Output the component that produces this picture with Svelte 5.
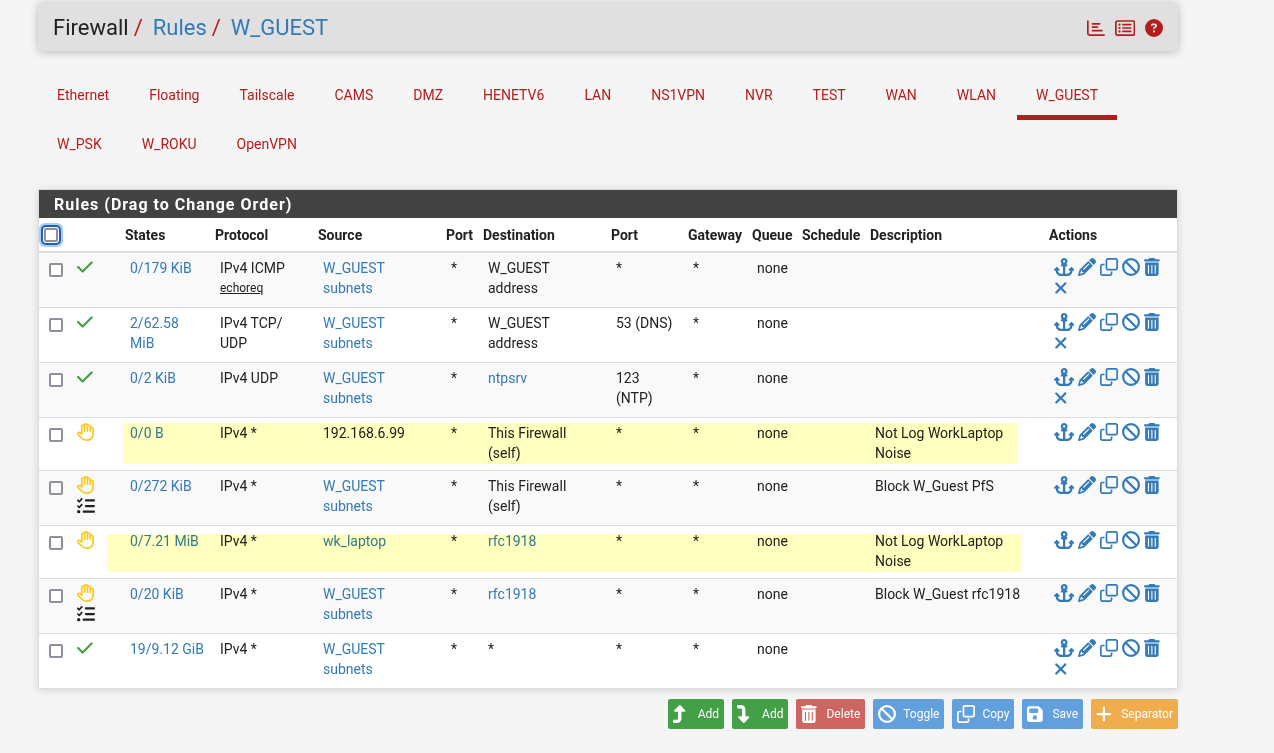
<script>
  const tabs = [
    'Ethernet', 'Floating', 'Tailscale', 'CAMS', 'DMZ', 'HENETV6', 'LAN', 'NS1VPN', 'NVR',
    'TEST', 'WAN', 'WLAN', 'W_GUEST', 'W_PSK', 'W_ROKU', 'OpenVPN',
  ];
  let active = $state('W_GUEST');

  const bar = 'c-8.8 0-16 7.2-16 16V432c0 8.8 7.2 16 16 16s16-7.2 16-16V208c0-8.8-7.2-16-16-16z';

  // [width, path] on a 512 high grid
  const icons = {
    anchor: [576, 'M320 96a32 32 0 1 1 -64 0 32 32 0 1 1 64 0zm21.1 80C367 158.8 384 129.4 384 96c0-53-43-96-96-96s-96 43-96 96c0 33.4 17 62.8 42.9 80H224c-17.7 0-32 14.3-32 32s14.3 32 32 32h32V448H208c-53 0-96-43-96-96v-6.1l7 7c9.4 9.4 24.6 9.4 33.9 0s9.4-24.6 0-33.9L97 263c-9.4-9.4-24.6-9.4-33.9 0L7 319c-9.4 9.4-9.4 24.6 0 33.9s24.6 9.4 33.9 0l7-7V352c0 88.4 71.6 160 160 160h80 80c88.4 0 160-71.6 160-160v-6.1l7 7c9.4 9.4 24.6 9.4 33.9 0s9.4-24.6 0-33.9l-56-56c-9.4-9.4-24.6-9.4-33.9 0l-56 56c-9.4 9.4-9.4 24.6 0 33.9s24.6 9.4 33.9 0l7-7V352c0 53-43 96-96 96H320V240h32c17.7 0 32-14.3 32-32s-14.3-32-32-32H341.1z'],
    pencil: [512, 'M410.3 231l11.3-11.3-33.9-33.9-62.1-62.1L291.7 89.8l-11.3 11.3-22.6 22.6L58.6 322.9c-10.4 10.4-18 23.3-22.2 37.4L1 480.7c-2.5 8.4-.2 17.5 6.1 23.7s15.3 8.5 23.7 6.1l120.3-35.4c14.1-4.2 27-11.8 37.4-22.2L387.7 253.7 410.3 231zM160 399.4l-9.1 22.7c-4 3.1-8.5 5.4-13.3 6.9L59.4 452l23-78.1c1.4-4.9 3.8-9.4 6.9-13.3l22.7-9.1v32c0 8.8 7.2 16 16 16h32zM362.7 18.7L348.3 33.2 325.7 55.8 314.3 67.1l33.9 33.9 62.1 62.1 33.9 33.9 11.3-11.3 22.6-22.6 14.5-14.5c25-25 25-65.5 0-90.5L453.3 18.7c-25-25-65.5-25-90.5 0zm-47.4 168l-144 144c-6.2 6.2-16.4 6.2-22.6 0s-6.2-16.4 0-22.6l144-144c6.2-6.2 16.4-6.2 22.6 0s6.2 16.4 0 22.6z'],
    clone: [512, 'M64 464H288c8.8 0 16-7.2 16-16V384h48v64c0 35.3-28.7 64-64 64H64c-35.3 0-64-28.7-64-64V224c0-35.3 28.7-64 64-64h64v48H64c-8.8 0-16 7.2-16 16V448c0 8.8 7.2 16 16 16zM224 304H448c8.8 0 16-7.2 16-16V64c0-8.8-7.2-16-16-16H224c-8.8 0-16 7.2-16 16V288c0 8.8 7.2 16 16 16zm-64-16V64c0-35.3 28.7-64 64-64H448c35.3 0 64 28.7 64 64V288c0 35.3-28.7 64-64 64H224c-35.3 0-64-28.7-64-64z'],
    ban: [512, 'M367.2 412.5L99.5 144.8C77.1 176.1 64 214.5 64 256c0 106 86 192 192 192c41.5 0 79.9-13.1 111.2-35.5zm45.3-45.3C434.9 335.9 448 297.5 448 256c0-106-86-192-192-192c-41.5 0-79.9 13.1-111.2 35.5L412.5 367.2zM0 256a256 256 0 1 1 512 0A256 256 0 1 1 0 256z'],
    trash: [448, 'M135.2 17.7C140.6 6.8 151.7 0 163.8 0H284.2c12.1 0 23.2 6.8 28.6 17.7L320 32h96c17.7 0 32 14.3 32 32s-14.3 32-32 32H32C14.3 96 0 81.7 0 64S14.3 32 32 32h96l7.2-14.3zM32 128H416V448c0 35.3-28.7 64-64 64H96c-35.3 0-64-28.7-64-64V128zM128 192' + bar + 'M224 192' + bar + 'M320 192' + bar],
    xmark: [384, 'M342.6 150.6c12.5-12.5 12.5-32.8 0-45.3s-32.8-12.5-45.3 0L192 210.7 86.6 105.4c-12.5-12.5-32.8-12.5-45.3 0s-12.5 32.8 0 45.3L146.7 256 41.4 361.4c-12.5 12.5-12.5 32.8 0 45.3s32.8 12.5 45.3 0L192 301.3 297.4 406.6c12.5 12.5 32.8 12.5 45.3 0s12.5-32.8 0-45.3L237.3 256 342.6 150.6z'],
    check: [448, 'M438.6 105.4c12.5 12.5 12.5 32.8 0 45.3l-256 256c-12.5 12.5-32.8 12.5-45.3 0l-128-128c-12.5-12.5-12.5-32.8 0-45.3s32.8-12.5 45.3 0L160 338.7 393.4 105.4c12.5-12.5 32.8-12.5 45.3 0z'],
    hand: [512, 'M256 0c-25.3 0-47.2 14.7-57.6 36c-7-2.6-14.5-4-22.4-4c-35.3 0-64 28.7-64 64V261.5l-2.7-2.7c-25-25-65.5-25-90.5 0s-25 65.5 0 90.5L106.5 437c48 48 113.1 75 181 75H296h8c1.5 0 3-.1 4.5-.4c91.7-6.2 165-79.4 171.1-171.1c.3-1.5 .4-3 .4-4.5V160c0-35.3-28.7-64-64-64c-5.5 0-10.9 .7-16 2V96c0-35.3-28.7-64-64-64c-7.9 0-15.4 1.4-22.4 4C303.2 14.7 281.3 0 256 0zM240 96.1c0 0 0-.1 0-.1V64c0-8.8 7.2-16 16-16s16 7.2 16 16V95.9c0 0 0 .1 0 .1V232c0 13.3 10.7 24 24 24s24-10.7 24-24V96c0 0 0 0 0-.1c0-8.8 7.2-16 16-16s16 7.2 16 16v55.9c0 0 0 .1 0 .1v80c0 13.3 10.7 24 24 24s24-10.7 24-24V160.1c0 0 0-.1 0-.1c0-8.8 7.2-16 16-16s16 7.2 16 16V332.9c-.1 .6-.1 1.3-.2 1.9c-3.4 69.7-59.3 125.6-129 129c-.6 0-1.3 .1-1.9 .2H296h-8.5c-55.2 0-108.1-21.9-147.1-60.9L52.7 315.3c-6.2-6.2-6.2-16.4 0-22.6s16.4-6.2 22.6 0L119 336.4c6.9 6.9 17.2 8.9 26.2 5.2s14.8-12.5 14.8-22.2V96c0-8.8 7.2-16 16-16c8.8 0 16 7.1 16 15.9V232c0 13.3 10.7 24 24 24s24-10.7 24-24V96.1z'],
    log: [512, 'M152 38c10 9 11 24 2 34L82 152c-4 5-10 8-17 8s-13-2-18-7L7 113c-9-9-9-25 0-34s25-9 34 0l22 22 56-62c9-10 24-11 34-1zm0 160c10 9 11 24 2 34l-72 80c-4 5-10 8-17 8s-13-2-18-7L7 273c-9-9-9-25 0-34s25-9 34 0l22 22 56-62c9-10 24-11 34-1zM224 96c0-18 14-32 32-32H480c18 0 32 14 32 32s-14 32-32 32H256c-18 0-32-14-32-32zm0 160c0-18 14-32 32-32H480c18 0 32 14 32 32s-14 32-32 32H256c-18 0-32-14-32-32zM160 416c0-18 14-32 32-32H480c18 0 32 14 32 32s-14 32-32 32H192c-18 0-32-14-32-32zM48 368a48 48 0 1 1 0 96 48 48 0 1 1 0-96z'],
    up: [384, 'M350 177.5c3.8-8.8 2-19-4.6-26l-136-144C204.9 2.7 198.6 0 192 0s-12.9 2.7-17.4 7.5l-136 144c-6.6 7-8.4 17.2-4.6 26s12.5 14.5 22 14.5h88l0 192c0 17.7-14.3 32-32 32H32c-17.7 0-32 14.3-32 32v32c0 17.7 14.3 32 32 32l80 0c70.7 0 128-57.3 128-128l0-192h88c9.6 0 18.2-5.7 22-14.5z'],
    down: [384, 'M350 334.5c3.8 8.8 2 19-4.6 26l-136 144c-4.5 4.8-10.8 7.5-17.4 7.5s-12.9-2.7-17.4-7.5l-136-144c-6.6-7-8.4-17.2-4.6-26s12.5-14.5 22-14.5h88V128c0-17.7-14.3-32-32-32H32C14.3 96 0 81.7 0 64V32C0 14.3 14.3 0 32 0h80c70.7 0 128 57.3 128 128v192h88c9.6 0 18.2 5.7 22 14.5z'],
    save: [448, 'M64 32C28.7 32 0 60.7 0 96V416c0 35.3 28.7 64 64 64H384c35.3 0 64-28.7 64-64V173.3c0-17-6.7-33.3-18.7-45.3L352 50.7C340 38.7 323.7 32 306.7 32H64zm0 96c0-17.7 14.3-32 32-32H288c17.7 0 32 14.3 32 32v64c0 17.7-14.3 32-32 32H96c-17.7 0-32-14.3-32-32V128zM224 288a64 64 0 1 1 0 128 64 64 0 1 1 0-128z'],
    plus: [448, 'M256 80c0-17.7-14.3-32-32-32s-32 14.3-32 32V224H48c-17.7 0-32 14.3-32 32s14.3 32 32 32H192V432c0 17.7 14.3 32 32 32s32-14.3 32-32V288H400c17.7 0 32-14.3 32-32s-14.3-32-32-32H256V80z'],
    chart: [512, 'M24 32c13.3 0 24 10.7 24 24V408c0 13.3 10.7 24 24 24H488c13.3 0 24 10.7 24 24s-10.7 24-24 24H72c-39.8 0-72-32.2-72-72V56C0 42.7 10.7 32 24 32zM128 136c0-13.3 10.7-24 24-24H360c13.3 0 24 10.7 24 24s-10.7 24-24 24H152c-13.3 0-24-10.7-24-24zm24 72H296c13.3 0 24 10.7 24 24s-10.7 24-24 24H152c-13.3 0-24-10.7-24-24s10.7-24 24-24zm0 96H424c13.3 0 24 10.7 24 24s-10.7 24-24 24H152c-13.3 0-24-10.7-24-24s10.7-24 24-24z'],
    list: [576, 'M64 80c-8.8 0-16 7.2-16 16V416c0 8.8 7.2 16 16 16H512c8.8 0 16-7.2 16-16V96c0-8.8-7.2-16-16-16H64zM0 96C0 60.7 28.7 32 64 32H512c35.3 0 64 28.7 64 64V416c0 35.3-28.7 64-64 64H64c-35.3 0-64-28.7-64-64V96zm96 64a32 32 0 1 1 64 0 32 32 0 1 1 -64 0zm104 0c0-13.3 10.7-24 24-24H448c13.3 0 24 10.7 24 24s-10.7 24-24 24H224c-13.3 0-24-10.7-24-24zm0 96c0-13.3 10.7-24 24-24H448c13.3 0 24 10.7 24 24s-10.7 24-24 24H224c-13.3 0-24-10.7-24-24zm0 96c0-13.3 10.7-24 24-24H448c13.3 0 24 10.7 24 24s-10.7 24-24 24H224c-13.3 0-24-10.7-24-24zM96 256a32 32 0 1 1 64 0 32 32 0 1 1 -64 0zm32 64a32 32 0 1 1 0 64 32 32 0 1 1 0-64z'],
    help: [512, 'M256 512A256 256 0 1 0 256 0a256 256 0 1 0 0 512zM169.8 165.3c7.9-22.3 29.1-37.3 52.8-37.3h58.3c34.9 0 63.1 28.3 63.1 63.1c0 22.6-12.1 43.5-31.7 54.8L280 264.4c-.2 13-10.9 23.6-24 23.6c-13.3 0-24-10.7-24-24V250.5c0-8.6 4.6-16.5 12.1-20.8l44.3-25.4c4.7-2.7 7.6-7.7 7.6-13.1c0-8.4-6.8-15.1-15.1-15.1H222.6c-3.4 0-6.4 2.1-7.5 5.3l-.4 1.2c-4.4 12.5-18.2 19-30.6 14.6s-19-18.2-14.6-30.6l.4-1.2zM224 352a32 32 0 1 1 64 0 32 32 0 1 1 -64 0z'],
  };

  const columns = [
    'States', 'Protocol', 'Source', 'Port', 'Destination', 'Port', 'Gateway', 'Queue',
    'Schedule', 'Description', 'Actions',
  ];

  const guest = 'W_GUEST\nsubnets';
  const self = 'This Firewall\n(self)';
  const rules = [
    { pass: true, states: '0/179 KiB', proto: 'IPv4 ICMP', sub: 'echoreq', src: guest, srcLink: true, dst: 'W_GUEST\naddress', port: '*', desc: '' },
    { pass: true, states: '2/62.58\nMiB', proto: 'IPv4 TCP/\nUDP', src: guest, srcLink: true, dst: 'W_GUEST\naddress', port: '53 (DNS)', desc: '' },
    { pass: true, states: '0/2 KiB', proto: 'IPv4 UDP', src: guest, srcLink: true, dst: 'ntpsrv', dstLink: true, port: '123\n(NTP)', desc: '' },
    { mark: 'mark', states: '0/0 B', proto: 'IPv4 *', src: '192.168.6.99', dst: self, port: '*', desc: 'Not Log WorkLaptop\nNoise' },
    { log: true, states: '0/272 KiB', proto: 'IPv4 *', src: guest, srcLink: true, dst: self, port: '*', desc: 'Block W_Guest PfS' },
    { mark: 'mark wide', states: '0/7.21 MiB', proto: 'IPv4 *', src: 'wk_laptop', srcLink: true, dst: 'rfc1918', dstLink: true, port: '*', desc: 'Not Log WorkLaptop\nNoise' },
    { log: true, states: '0/20 KiB', proto: 'IPv4 *', src: guest, srcLink: true, dst: 'rfc1918', dstLink: true, port: '*', desc: 'Block W_Guest rfc1918' },
    { pass: true, states: '19/9.12 GiB', proto: 'IPv4 *', src: guest, srcLink: true, dst: '*', port: '*', desc: '' },
  ];

  const actions = [
    ['anchor', 'Move checked rules here'],
    ['pencil', 'Edit'],
    ['clone', 'Copy'],
    ['ban', 'Disable'],
    ['trash', 'Delete this rule'],
  ];

  const buttons = [
    ['up', 'Add', 'success'],
    ['down', 'Add', 'success'],
    ['trash', 'Delete', 'danger'],
    ['ban', 'Toggle', 'primary'],
    ['clone', 'Copy', 'primary'],
    ['save', 'Save', 'primary'],
    ['plus', 'Separator', 'warning'],
  ];
</script>

{#snippet icon(name)}
  <svg class="icon" viewBox="0 0 {icons[name][0]} 512" aria-hidden="true">
    <path fill="currentColor" fill-rule="evenodd" d={icons[name][1]} />
  </svg>
{/snippet}

{#snippet value(text, link)}
  {#if link}<a href="#rule">{text}</a>{:else}{text}{/if}
{/snippet}

<div class="container">
  <header>
    <h1>
      <span>Firewall</span><i>/</i><a href="#rules">Rules</a><i>/</i><a href="#guest">W_GUEST</a>
    </h1>
    <div class="shortcuts">
      <a href="#status" aria-label="Status">{@render icon('chart')}</a>
      <a href="#logs" aria-label="Logs">{@render icon('list')}</a>
      <a href="#help" aria-label="Help">{@render icon('help')}</a>
    </div>
  </header>

  <nav>
    {#each tabs as tab}
      <a href="#{tab}" class:active={tab === active} onclick={() => (active = tab)}>{tab}</a>
    {/each}
  </nav>

  <section class="panel">
    <h2>Rules (Drag to Change Order)</h2>
    <table>
      <colgroup>
        <col class="c-check" /><col class="c-status" /><col class="c-states" /><col class="c-proto" />
        <col class="c-addr" /><col class="c-sport" /><col class="c-addr" /><col class="c-dport" />
        <col class="c-gateway" /><col class="c-queue" /><col class="c-schedule" /><col /><col class="c-actions" />
      </colgroup>
      <thead>
        <tr>
          <th><input type="checkbox" class="focused" aria-label="Select all" /></th>
          <th></th>
          {#each columns as column}
            <th>{column}</th>
          {/each}
        </tr>
      </thead>
      <tbody>
        {#each rules as rule, i}
          <tr>
            <td><input type="checkbox" aria-label="Select rule {i + 1}" /></td>
            <td>
              <div class="status" class:pass={rule.pass}>
                {@render icon(rule.pass ? 'check' : 'hand')}
                {#if rule.log}<span class="log">{@render icon('log')}</span>{/if}
              </div>
              {#if rule.mark}<span class={rule.mark}></span>{/if}
            </td>
            <td><a href="#states">{rule.states}</a></td>
            <td>{rule.proto}{#if rule.sub}<small>{rule.sub}</small>{/if}</td>
            <td>{@render value(rule.src, rule.srcLink)}</td>
            <td>*</td>
            <td>{@render value(rule.dst, rule.dstLink)}</td>
            <td>{rule.port}</td>
            <td>*</td>
            <td>none</td>
            <td></td>
            <td>{rule.desc}</td>
            <td>
              <div class="actions">
                {#each actions as [name, label]}
                  <a href="#{name}" aria-label={label}>{@render icon(name)}</a>
                {/each}
                {#if rule.pass}
                  <a href="#kill" aria-label="Kill states">{@render icon('xmark')}</a>
                {/if}
              </div>
            </td>
          </tr>
        {/each}
      </tbody>
    </table>
  </section>

  <div class="buttons">
    {#each buttons as [name, label, kind]}
      <button type="button" class={kind}><span class="slot">{@render icon(name)}</span>{label}</button>
    {/each}
  </div>
</div>

<style>
  :global(body) {
    background: #f5f5f5;
    color: #212121;
    font-family: Roboto, "Liberation Sans", sans-serif;
    font-size: 14px;
    line-height: 20px;
  }

  a {
    color: #337ab7;
    text-decoration: none;
  }

  .icon {
    display: block;
    height: 18px;
  }

  .container {
    padding: 3px 96px 20px 38px;
  }

  header {
    display: flex;
    align-items: center;
    justify-content: space-between;
    padding: 10px 15px 8px;
    background: #e0e0e0;
    border-radius: 4px;
    box-shadow: 0 1px 8px rgba(0, 0, 0, 0.25);
  }

  h1 {
    display: flex;
    margin: 0;
    font-size: 22px;
    font-weight: 400;
    line-height: 30px;
  }

  h1 i {
    margin: 0 10px 0 5px;
    color: #b71c1c;
    font-style: normal;
  }

  .shortcuts {
    display: flex;
    gap: 10px;
  }

  .shortcuts a {
    color: #b71c1c;
  }

  nav {
    display: flex;
    flex-wrap: wrap;
    gap: 4px 2px;
    margin-top: 24px;
  }

  nav a {
    padding: 10px 19px;
    border-bottom: 5px solid transparent;
    color: #b71c1c;
  }

  nav a.active {
    border-color: #b71c1c;
  }

  .panel {
    margin-top: 20px;
    background: #fff;
    border: 1px solid #ddd;
    box-shadow: 0 1px 8px rgba(0, 0, 0, 0.15);
  }

  h2 {
    margin: 0;
    padding: 5px 15px 3px;
    background: #424242;
    color: #fff;
    font-size: 16px;
    font-weight: 700;
    letter-spacing: 1px;
    line-height: 20px;
  }

  table {
    width: 100%;
    border-spacing: 0;
    table-layout: fixed;
  }

  .c-check { width: 28px; }
  .c-status { width: 53px; }
  .c-states { width: 90px; }
  .c-proto { width: 103px; }
  .c-addr { width: 128px; }
  .c-sport { width: 37px; }
  .c-dport { width: 77px; }
  .c-gateway { width: 64px; }
  .c-queue { width: 50px; }
  .c-schedule { width: 68px; }
  .c-actions { width: 133px; }

  th {
    padding: 7px 0 6px 5px;
    border-bottom: 2px solid #ddd;
    font-weight: 700;
    text-align: left;
    white-space: nowrap;
  }

  td {
    padding: 5px 0 7px 10px;
    border-top: 1px solid #ddd;
    vertical-align: top;
    white-space: pre-line;
  }

  tbody tr {
    position: relative;
  }

  tbody tr:first-child td {
    border-top: 0;
  }

  tbody tr:nth-child(odd) {
    background: #f9f9f9;
  }

  input {
    display: block;
    appearance: none;
    box-sizing: border-box;
    width: 14px;
    height: 14px;
    margin: 5px 0 0;
    background: #fff;
    border: 2px solid #8f8f9d;
    border-radius: 2px;
  }

  input:checked {
    background: #337ab7;
  }

  .focused {
    margin: 0;
    box-shadow: 0 0 0 1px #fff, 0 0 0 3px #1f5fb8, 0 0 0 5px #a9cdf5;
  }

  small {
    display: block;
    font-size: 12px;
    text-decoration: underline;
  }

  .status {
    display: grid;
    grid-auto-rows: 21px;
    justify-items: start;
    color: #fbc81e;
  }

  .status.pass {
    color: #43a047;
  }

  .log {
    color: #212121;
  }

  .mark {
    position: absolute;
    inset: 6px 160px 6px 84px;
    background: #ffffbf;
    mix-blend-mode: multiply;
    pointer-events: none;
  }

  .mark.wide {
    inset: 9px 156px 6px 68px;
  }

  .actions {
    display: flex;
    flex-wrap: wrap;
    column-gap: 4px;
    padding-right: 5px;
  }

  .actions a {
    height: 21px;
  }

  .buttons {
    display: flex;
    justify-content: flex-end;
    gap: 8px;
    margin-top: 10px;
  }

  button {
    display: flex;
    align-items: center;
    gap: 5px;
    height: 30px;
    padding: 0 5px;
    border: 0;
    border-radius: 2px;
    color: #fff;
    font-family: inherit;
    font-size: 12px;
  }

  .slot {
    width: 20px;
  }

  .success { background: #43a047; }
  .danger { background: #cd6562; }
  .primary { background: #629fdd; }
  .warning { background: #f0ad4e; }
</style>
